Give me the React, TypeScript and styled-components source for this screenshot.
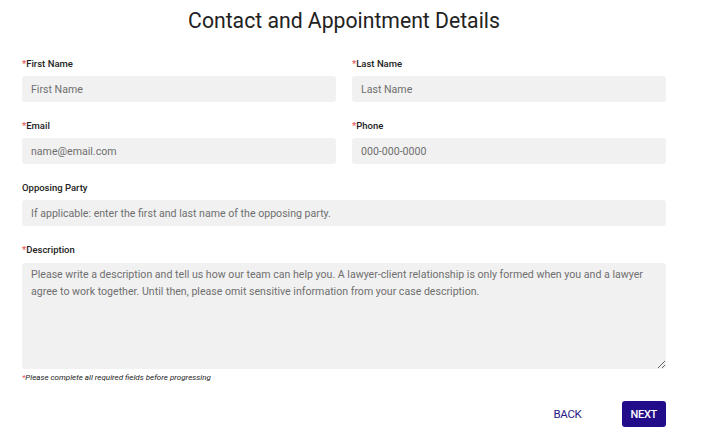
import styled, { createGlobalStyle } from "styled-components";

const GlobalStyle = createGlobalStyle`
  body {
    margin: 0;
    background: #ffffff;
    font-family: Roboto, "Liberation Sans", sans-serif;
  }
`;

const Page = styled.div`
  width: 644px;
  padding: 0 39px 0 22px;
`;

const Title = styled.h1`
  margin: 0;
  padding-top: 8px;
  height: 49px;
  text-align: center;
  font-size: 21.2px;
  font-weight: 400;
  color: #222;
  line-height: 26px;
`;

const Grid = styled.div`
  display: grid;
  grid-template-columns: 1fr 1fr;
  column-gap: 16px;
  row-gap: 17px;
`;

const Field = styled.div<{ $full?: boolean }>`
  display: flex;
  flex-direction: column;
  grid-column: ${(p) => (p.$full ? "1 / span 2" : "auto")};
`;

const Label = styled.label<{ $tall?: boolean }>`
  font-size: 9.5px;
  font-weight: 500;
  color: #222;
  height: ${(p) => (p.$tall ? "20px" : "19px")};
  line-height: 14px;
`;

const Star = styled.span`
  color: #e0535b;
`;

const Input = styled.input`
  box-sizing: border-box;
  height: 26px;
  border: none;
  border-radius: 3px;
  background: #f1f1f1;
  padding: 0 9px;
  font-family: Roboto, "Liberation Sans", sans-serif;
  font-size: 10.6px;
  outline: none;
  &::placeholder {
    color: #6f6f6f;
  }
`;

const TextArea = styled.textarea`
  box-sizing: border-box;
  height: 106px;
  border: none;
  border-radius: 3px;
  background: #f1f1f1;
  padding: 4px 9px;
  font-family: Roboto, "Liberation Sans", sans-serif;
  font-size: 10.6px;
  line-height: 16.5px;
  outline: none;
  resize: vertical;
  &::placeholder {
    color: #6f6f6f;
  }
`;

const Hint = styled.div`
  margin-top: 4px;
  font-size: 8px;
  font-style: italic;
  color: #222;
`;

const Actions = styled.div`
  display: flex;
  justify-content: flex-end;
  align-items: center;
  gap: 31px;
  margin-top: 19px;
`;

const Button = styled.button<{ $primary?: boolean }>`
  height: 26px;
  padding: 0 9px;
  border: none;
  border-radius: 3px;
  font-family: Roboto, "Liberation Sans", sans-serif;
  font-size: ${(p) => (p.$primary ? "11px" : "11.5px")};
  font-weight: ${(p) => (p.$primary ? 500 : 400)};
  letter-spacing: -0.3px;
  cursor: pointer;
  background: ${(p) => (p.$primary ? "#230c8a" : "transparent")};
  color: ${(p) => (p.$primary ? "#ffffff" : "#2b1b8a")};
`;

type FieldDef = {
  label: string;
  placeholder: string;
  required?: boolean;
  full?: boolean;
};

const fields: FieldDef[] = [
  { label: "First Name", placeholder: "First Name", required: true },
  { label: "Last Name", placeholder: "Last Name", required: true },
  { label: "Email", placeholder: "name@email.com", required: true },
  { label: "Phone", placeholder: "000-000-0000", required: true },
  {
    label: "Opposing Party",
    placeholder: "If applicable: enter the first and last name of the opposing party.",
    full: true,
  },
];

export default function App() {
  return (
    <>
      <GlobalStyle />
      <Page>
        <Title>Contact and Appointment Details</Title>
        <Grid>
          {fields.map((f) => (
            <Field key={f.label} $full={f.full}>
              <Label>
                {f.required && <Star>*</Star>}
                {f.label}
              </Label>
              <Input placeholder={f.placeholder} />
            </Field>
          ))}
          <Field $full>
            <Label $tall>
              <Star>*</Star>Description
            </Label>
            <TextArea placeholder="Please write a description and tell us how our team can help you. A lawyer-client relationship is only formed when you and a lawyer agree to work together. Until then, please omit sensitive information from your case description." />
            <Hint>
              <Star>*</Star>Please complete all required fields before progressing
            </Hint>
          </Field>
        </Grid>
        <Actions>
          <Button>BACK</Button>
          <Button $primary>NEXT</Button>
        </Actions>
      </Page>
    </>
  );
}
